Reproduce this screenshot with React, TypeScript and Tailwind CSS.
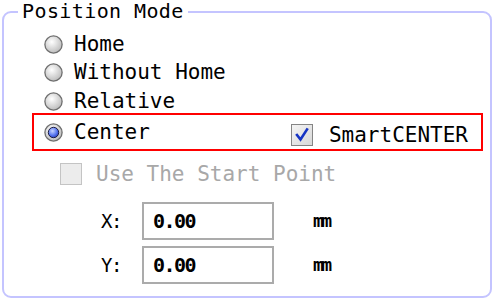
import React from "react"

function Radio({ checked = false }: { checked?: boolean }) {
  return (
    <svg width="19" height="19" viewBox="0 0 19 19" className="shrink-0">
      <defs>
        <radialGradient id="rg-off" cx="40%" cy="35%" r="70%">
          <stop offset="0%" stopColor="#ffffff" />
          <stop offset="100%" stopColor="#b8b8b8" />
        </radialGradient>
        <radialGradient id="rg-dot" cx="40%" cy="35%" r="70%">
          <stop offset="0%" stopColor="#c8d4ff" />
          <stop offset="60%" stopColor="#5a78f0" />
          <stop offset="100%" stopColor="#2638b8" />
        </radialGradient>
      </defs>
      <circle cx="9.5" cy="9.5" r="8.6" fill="url(#rg-off)" stroke="#6e6e6e" strokeWidth="1.3" />
      {checked && <circle cx="9.5" cy="9.5" r="5.2" fill="url(#rg-dot)" stroke="#1c1c40" strokeWidth="1" />}
    </svg>
  )
}

function Checkbox({ checked = false, disabled = false }: { checked?: boolean; disabled?: boolean }) {
  return (
    <div
      className={`flex h-[22px] w-[22px] shrink-0 items-center justify-center border ${
        disabled ? "border-[#c4c4c4] bg-[#ececec]" : "border-[#858585] bg-gradient-to-br from-[#f4f4f4] to-[#d8d8d8]"
      }`}
    >
      {checked && (
        <svg width="16" height="16" viewBox="0 0 16 16">
          <path d="M3 8 L6.5 12.5 L13 2.5" fill="none" stroke="#1634c4" strokeWidth="2.6" strokeLinecap="square" />
        </svg>
      )}
    </div>
  )
}

function RadioRow({ label, className = "" }: { label: string; className?: string }) {
  return (
    <div className={`flex h-[28px] items-center gap-[11px] pl-[40px] ${className}`}>
      <Radio />
      <span>{label}</span>
    </div>
  )
}

function CoordRow({ label, value, className = "" }: { label: string; value: string; className?: string }) {
  return (
    <div className={`flex items-center pl-[97px] ${className}`}>
      <span className="w-[41px] text-[19px] leading-[22px] tracking-[-1.5px]">{label}</span>
      <div className="flex h-[38px] w-[132px] items-center border-2 border-[#ababab] pl-[9px] text-[20px] font-semibold tracking-[-1.5px]">
        {value}
      </div>
      <span className="ml-[39px] text-[18px] font-semibold leading-[22px] tracking-[-2.5px]">mm</span>
    </div>
  )
}

export default function App() {
  return (
    <div className="h-[300px] w-[495px] bg-white text-[21px] text-black font-['DejaVu_Sans_Mono',monospace]">
      <fieldset className="m-0 ml-[2px] h-[298px] w-[490px] rounded-[9px] border-2 border-[#c4c4ff] p-0">
        <legend className="ml-[14px] px-[4px] text-[20px] leading-[23px] tracking-[0.4px]">Position Mode</legend>
        <div className="flex flex-col pt-[7px] leading-[28px]">
          <RadioRow label="Home" />
          <RadioRow label="Without Home" />
          <RadioRow label="Relative" className="mt-[1px]" />

          <div className="ml-[28px] mt-[-2px] flex h-[38px] w-[451px] items-center border-2 border-[#ff0000] pl-[10px] pr-[13px]">
            <div className="flex items-center gap-[11px]">
              <Radio checked />
              <span>Center</span>
            </div>
            <div className="ml-auto mt-[5px] flex items-center gap-[16px]">
              <Checkbox checked />
              <span>SmartCENTER</span>
            </div>
          </div>

          <div className="mt-[9px] flex h-[28px] items-center gap-[14px] pl-[56px] text-[#a8a8a8]">
            <Checkbox disabled />
            <span>Use The Start Point</span>
          </div>

          <CoordRow label="X:" value="0.00" className="mt-[14px]" />
          <CoordRow label="Y:" value="0.00" className="mt-[6px]" />
        </div>
      </fieldset>
    </div>
  )
}
